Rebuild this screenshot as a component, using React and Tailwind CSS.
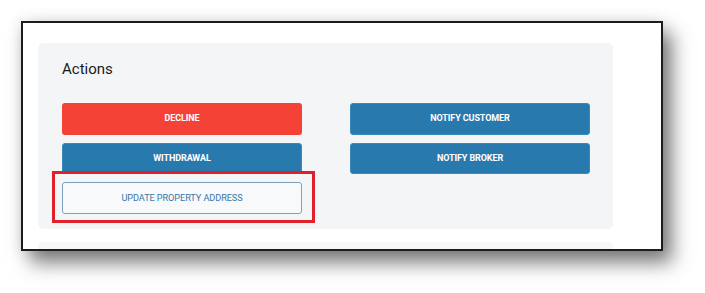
export default function App() {
  return (
    <div className="w-[705px] h-[293px] bg-white overflow-hidden pt-[21px] pl-[21px]" style={{ fontFamily: "Roboto, 'Liberation Sans', sans-serif" }}>
      <div className="w-[642px] h-[230px] border-2 border-[#1c1c1c] bg-white overflow-hidden shadow-[9px_12px_18px_rgba(0,0,0,0.5),0_0_14px_rgba(0,0,0,0.12)]">
        <div className="pt-[20px] pl-[15px] flex flex-col gap-[13px]">
          <div className="w-[575px] h-[186px] rounded-[5px] bg-[#f3f5f7] pt-[17px] pl-[24px] pr-[23px]">
            <div className="text-[15px] leading-[18px] text-[#1b1b1b]">Actions</div>
            <div className="mt-[25px] grid grid-cols-2 gap-x-[48px] gap-y-2">
              <button className="h-[31.5px] rounded-[3px] bg-[#f44336] text-white text-[9px] font-bold tracking-[-0.1px]">DECLINE</button>
              <button className="h-[31.5px] rounded-[3px] bg-[#2879ae] border border-[#3b88bb] text-white text-[9px] font-bold tracking-[-0.1px]">NOTIFY CUSTOMER</button>
              <button className="h-[31.5px] rounded-[3px] bg-[#2879ae] border border-[#3b88bb] text-white text-[9px] font-bold tracking-[-0.1px]">WITHDRAWAL</button>
              <button className="h-[31.5px] rounded-[3px] bg-[#2879ae] border border-[#3b88bb] text-white text-[9px] font-bold tracking-[-0.1px]">NOTIFY BROKER</button>
              <div className="relative">
                <button className="w-full h-[31.5px] rounded-[3px] bg-[#f7f9fb] border border-[#7ea2be] text-[#3a77a6] text-[9.2px] tracking-[-0.1px]">UPDATE PROPERTY ADDRESS</button>
                <div className="absolute left-[-10px] top-[-11px] right-[-13px] bottom-[-9px] border-[3px] border-[#e0202b]"></div>
              </div>
            </div>
          </div>
          <div className="w-[575px] h-[40px] rounded-[5px] bg-[#f5f7f9]"></div>
        </div>
      </div>
    </div>
  );
}
